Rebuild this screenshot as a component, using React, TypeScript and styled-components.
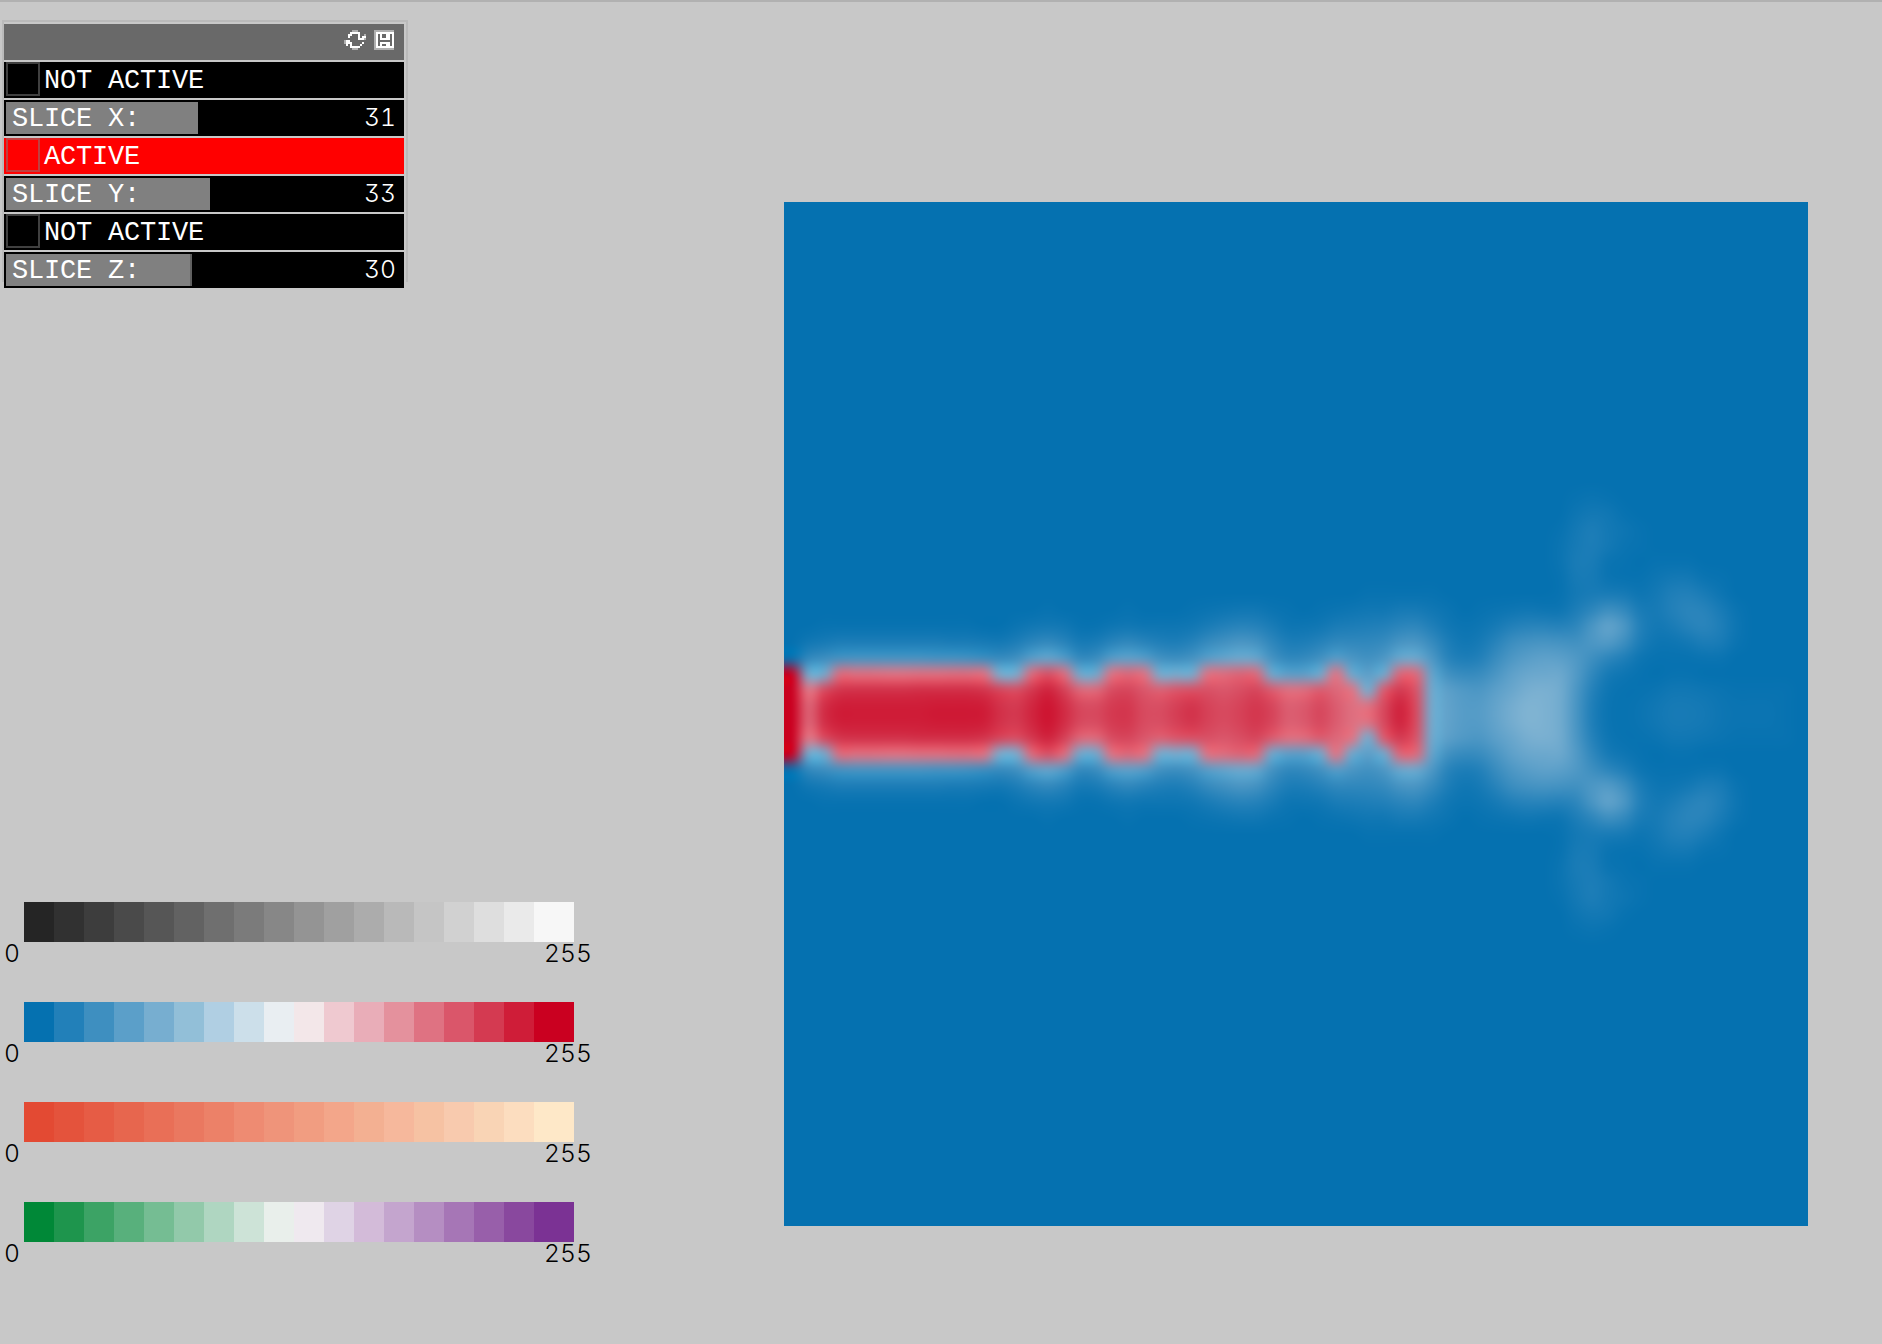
import React, { useLayoutEffect, useRef } from "react";
import styled, { createGlobalStyle } from "styled-components";

const GlobalStyle = createGlobalStyle`
  html, body { margin: 0; background: #c8c8c8; }
  body { overflow: hidden; }
  *, *::before, *::after { box-sizing: border-box; }
`;

const GREYS = ["#252525", "#313131", "#3d3d3d", "#4a4a4a", "#565656", "#626262", "#6f6f6f", "#7b7b7b", "#878787", "#949494", "#a0a0a0", "#acacac", "#b9b9b9", "#c5c5c5", "#d1d1d1", "#dedede", "#eaeaea", "#f7f7f7"];
const BLUE_RED = ["#0571b0", "#2280b9", "#3e8fc0", "#5b9fc9", "#77aed0", "#92bfd8", "#b0cfe3", "#ccdfea", "#e9eef2", "#f3e7e9", "#efc9d0", "#e9adb8", "#e4919d", "#df7282", "#da566a", "#d43a51", "#cf1d38", "#ca0020"];
const ORANGES = ["#e34a33", "#e4533c", "#e65c45", "#e7664e", "#e96f57", "#ea7860", "#ec8168", "#ee8b72", "#ef947a", "#f19d81", "#f3a68a", "#f3b092", "#f6b89c", "#f6c2a3", "#f8caae", "#f9d4b5", "#fcddbf", "#fee8c8"];
const GREEN_PURPLE = ["#008837", "#1e954d", "#3ca365", "#58b07c", "#75bd93", "#92c9aa", "#afd6c1", "#cde3d7", "#e9efeb", "#efe9ef", "#dfd3e5", "#d3bbd9", "#c4a5ce", "#b58ec2", "#a676b6", "#985faa", "#89489e", "#7b3294"];

const GRID = 64;
const CELL = 16;
const SIZE = GRID * CELL;

/* Field values per grid column, listed outward from the horizontal mid-line. */
const FIELD: number[][] = [
  [17, 17, 17, 0.1],
  [13.5, 12.8, 3.7, 1.5, 0.4],
  [15.4, 14.4, 3.8, 1.9, 0.6, 0.1],
  [16, 15.2, 13.2, 2.2, 0.8, 0.1],
  [16, 15.3, 13.1, 2.3, 0.8, 0.1],
  [16, 15.3, 13.1, 2.3, 0.8, 0.1],
  [16, 15.3, 13, 2.3, 0.8, 0.1],
  [16, 15.3, 13, 2.3, 0.8, 0.1],
  [16, 15.4, 13.1, 2.3, 0.8, 0.1],
  [16.1, 15.4, 13.1, 2.2, 0.8, 0.1],
  [16.1, 15.4, 13.2, 2.2, 0.7, 0.1],
  [16.1, 15.4, 13.2, 2.1, 0.7, 0.1],
  [16, 15.2, 13, 1.9, 0.6],
  [15.3, 14.6, 4, 1.7, 0.5],
  [15, 14.3, 4, 2, 0.8, 0.2],
  [15.7, 15.1, 13.3, 2.9, 1.3, 0.4],
  [16.3, 15.8, 14.2, 3.3, 1.6, 0.5, 0.1],
  [15.5, 14.8, 13.2, 2.7, 1.2, 0.4],
  [14.5, 13.4, 3.7, 1.6, 0.6, 0.1],
  [14.4, 13.3, 3.7, 1.8, 0.7, 0.1],
  [15, 14.4, 13, 2.8, 1.2, 0.3],
  [15.1, 14.6, 13.4, 3.1, 1.5, 0.4, 0.1],
  [14.4, 14, 13, 2.8, 1.2, 0.3],
  [14.3, 13.6, 3.9, 2.1, 0.9, 0.3],
  [14.8, 14, 3.9, 1.9, 0.8, 0.3],
  [15.2, 14.2, 3.9, 2.2, 1.1, 0.4, 0.1],
  [14.7, 14.2, 13, 2.9, 1.7, 0.7, 0.2],
  [14.4, 14, 13.2, 3.3, 2.1, 1, 0.3],
  [14.7, 14.3, 13.5, 3.6, 2.4, 1.2, 0.4],
  [15.1, 14.6, 13.3, 3.4, 2.2, 1.1, 0.4],
  [14.6, 13.8, 3.6, 2.2, 1.4, 0.7, 0.2],
  [13.7, 13.1, 3, 1.5, 0.8, 0.3, 0.1],
  [13.9, 13.2, 3, 1.6, 0.8, 0.3],
  [14.5, 13.8, 3.7, 2.1, 1.1, 0.4, 0.1],
  [13.8, 13.4, 12.9, 2.8, 1.5, 0.7, 0.2],
  [13.1, 12.9, 3.6, 2.4, 1.5, 0.8, 0.3],
  [13, 3.9, 3, 2.1, 1.5, 0.9, 0.4, 0.1],
  [14.5, 13.8, 3.7, 2.5, 1.7, 1, 0.4, 0.1],
  [15.8, 15, 13.4, 3.5, 2.3, 1.3, 0.6, 0.1],
  [14.4, 14.1, 13.3, 3.6, 2.4, 1.4, 0.6, 0.1],
  [3.8, 3.7, 3.3, 2.5, 1.7, 0.9, 0.4, 0.1],
  [3.2, 3, 2.1, 1.2, 0.8, 0.4, 0.2],
  [2.8, 2.6, 1.7, 0.8, 0.4, 0.2],
  [2.8, 2.5, 1.8, 1, 0.6, 0.3, 0.1],
  [3.3, 3, 2.4, 1.8, 1.2, 0.6, 0.2],
  [3.9, 3.5, 3.1, 2.5, 1.9, 1, 0.3],
  [4.3, 4, 3.5, 2.9, 2.2, 1.2, 0.4],
  [4.2, 4.1, 3.6, 3.1, 2.3, 1.2, 0.3],
  [3.8, 3.8, 3.6, 3, 2.2, 1.1, 0.3, 0.1, 0.1, 0.2, 0.2, 0.1],
  [2.4, 2.5, 2.7, 2.6, 2.1, 1.4, 0.8, 0.5, 0.6, 0.7, 0.6, 0.5, 0.3, 0.1],
  [0.9, 1.1, 1.5, 2, 2.5, 2.4, 1.4, 0.7, 0.6, 0.7, 0.8, 0.8, 0.5, 0.2],
  [0.2, 0.3, 0.6, 1.4, 2.7, 3.2, 2, 0.7, 0.2, 0.2, 0.5, 0.5, 0.4, 0.1],
  [0.1, 0.1, 0.3, 0.9, 2, 2.5, 1.6, 0.6, 0.1, 0.1, 0.2, 0.3, 0.1],
  [0.2, 0.1, 0.1, 0.3, 0.8, 1, 0.7, 0.3, 0.1, 0, 0.1, 0.1],
  [0.4, 0.2, 0, 0.1, 0.3, 0.5, 0.6, 0.5, 0.3, 0.1],
  [0.6, 0.4, 0.1, 0.1, 0.3, 0.7, 1, 0.9, 0.5, 0.1],
  [0.6, 0.4, 0.1, 0.1, 0.5, 1.1, 1.3, 1, 0.5, 0.1],
  [0.5, 0.3, 0, 0.2, 0.8, 1.3, 1.2, 0.7, 0.2],
  [0.3, 0.2, 0, 0.2, 0.7, 0.9, 0.7, 0.3, 0.1],
  [0.2, 0.1, 0, 0, 0.2, 0.3, 0.2],
  [0.2, 0.1],
  [0.2, 0.1],
  [0.1, 0.1],
  [0],
];

type Rgb = [number, number, number];
const STOPS: Rgb[] = BLUE_RED.map((hex) => [
  parseInt(hex.slice(1, 3), 16),
  parseInt(hex.slice(3, 5), 16),
  parseInt(hex.slice(5, 7), 16),
]);

function colourAt(value: number): Rgb {
  const low = Math.min(16, Math.floor(value));
  const t = value - low;
  return STOPS[low].map((c, i) => c + (STOPS[low + 1][i] - c) * t) as Rgb;
}

/* Mitchell-Netravali kernel, B = C = 1/3. */
function kernel(distance: number) {
  const x = Math.abs(distance);
  if (x < 1) return (7 * x * x * x - 12 * x * x + 16 / 3) / 6;
  if (x < 2) return ((-7 / 3) * x * x * x + 12 * x * x - 20 * x + 32 / 3) / 6;
  return 0;
}

/* Stretches a row of samples to SIZE pixels with the cubic kernel. */
function stretch(samples: number[]): number[] {
  const at = (i: number) => samples[Math.max(0, Math.min(GRID - 1, i))];
  return Array.from({ length: SIZE }, (_, p) => {
    const u = (p + 0.5) / CELL - 0.5;
    const i = Math.floor(u);
    let sum = 0;
    for (let k = i - 1; k <= i + 2; k++) sum += at(k) * kernel(u - k);
    return sum;
  });
}

function paintField(ctx: CanvasRenderingContext2D) {
  const image = ctx.createImageData(SIZE, SIZE);
  for (let ch = 0; ch < 3; ch++) {
    const columns = FIELD.map((column) =>
      stretch(
        Array.from({ length: GRID }, (_, row) => {
          const d = row < 32 ? 31 - row : row - 32;
          return colourAt(column[d] ?? 0)[ch];
        })
      )
    );
    for (let y = 0; y < SIZE; y++) {
      const line = stretch(columns.map((c) => c[y]));
      for (let x = 0; x < SIZE; x++) {
        image.data[(y * SIZE + x) * 4 + ch] = line[x];
      }
    }
  }
  for (let i = 3; i < image.data.length; i += 4) image.data[i] = 255;
  ctx.putImageData(image, 0, 0);
}

const Page = styled.main`
  display: flex;
  width: 1882px;
  height: 1344px;
  border-top: 2px solid #b1b1b1;
  background: #c8c8c8;
`;

const Sidebar = styled.aside`
  display: flex;
  flex-direction: column;
  justify-content: space-between;
  width: 784px;
  padding: 18px 0 78px 2px;
`;

const Panel = styled.section`
  position: relative;
  display: flex;
  flex-direction: column;
  gap: 2px;
  width: 406px;
  padding: 4px 4px 0 2px;

  &::before {
    content: "";
    position: absolute;
    inset: 0 0 6px 0;
    border: 2px solid #bababa;
    border-bottom: 0;
  }
`;

const PanelHeader = styled.header`
  position: relative;
  display: flex;
  justify-content: flex-end;
  gap: 8px;
  height: 36px;
  padding: 6px 10px 0 0;
  background: #696969;
`;

const PixelIcon = styled.svg`
  display: block;
  height: 20px;
  shape-rendering: crispEdges;
`;

const labelFont = `
  font-family: "Liberation Mono", monospace;
  font-size: 27px;
  letter-spacing: -0.2px;
  white-space: pre;
`;

const numberFont = `
  font-family: Inter, "Liberation Sans", sans-serif;
  font-weight: 300;
  font-size: 24.7px;
  font-feature-settings: "tnum", "cv09";
  white-space: pre;
`;

const ToggleRow = styled.div<{ $on: boolean }>`
  position: relative;
  display: flex;
  height: 36px;
  padding-left: 2px;
  background: ${(p) => (p.$on ? "#ff0000" : "#000000")};
`;

const ToggleBox = styled.span`
  width: 34px;
  height: 34px;
  border: 2px solid rgba(128, 128, 128, 0.5);
`;

const ToggleLabel = styled.span`
  ${labelFont}
  line-height: 38px;
  margin-left: 4px;
  color: #fff;
`;

const SliderRow = styled.div`
  position: relative;
  display: flex;
  height: 36px;
  padding: 2px;
  background: #000;
`;

const SliderFill = styled.div<{ $width: number; $partial?: boolean }>`
  width: ${(p) => p.$width}px;
  height: 32px;
  background: #808080;
  border-right: ${(p) => (p.$partial ? "2px solid #606060" : "0")};
`;

const SliderLabel = styled.span`
  ${labelFont}
  display: block;
  line-height: 34px;
  padding-left: 6px;
  color: #fff;
`;

const SliderValue = styled.span`
  ${numberFont}
  margin-left: auto;
  padding-right: 6px;
  line-height: 31px;
  color: #fff;
`;

const Legends = styled.section`
  display: flex;
  flex-direction: column;
  gap: 36px;
`;

const Legend = styled.div`
  display: flex;
  flex-direction: column;
`;

const Swatches = styled.div`
  display: flex;
  width: 550px;
  height: 40px;
  margin-left: 22px;
`;

const Swatch = styled.span<{ $colour: string }>`
  flex: 0 0 30px;
  background: ${(p) => p.$colour};
  &:last-child {
    flex-basis: 40px;
  }
`;

const Range = styled.div`
  ${numberFont}
  display: flex;
  justify-content: space-between;
  width: 590px;
  height: 24px;
  padding-left: 2px;
  line-height: 22px;
  color: #000;
`;

const Field = styled.canvas`
  display: block;
  width: ${SIZE}px;
  height: ${SIZE}px;
  margin-top: 200px;
`;

/* "#" is a full pixel, "+" a dimmed one. */
const REFRESH = [
  "....+++....",
  "...#####...",
  "..##...#..+",
  "..#....#.##",
  ".......###+",
  "+##........",
  "+###.....#.",
  ".#.#....#..",
  "...#####...",
  "....+++....",
];
const SAVE = [
  "++++++++++",
  "+#########",
  "+#.#..##.#",
  "+#.#..##.#",
  "+#.#####.#",
  "+#.......#",
  "+#.#####.#",
  "+#.#..##.#",
  "+#########",
  "++++++++++",
];

function Pixels({ rows }: { rows: string[] }) {
  const w = rows[0].length;
  return (
    <PixelIcon viewBox={`0 0 ${w} ${rows.length}`} width={w * 2}>
      {rows.flatMap((row, y) =>
        [...row].map((c, x) =>
          c === "." ? null : (
            <rect key={`${x}-${y}`} x={x} y={y} width={1} height={1} fill={c === "#" ? "#fff" : "#b0b0b0"} />
          )
        )
      )}
    </PixelIcon>
  );
}

const AXES = [
  { name: "X", value: 31, width: 192, active: false },
  { name: "Y", value: 33, width: 204, active: true },
  { name: "Z", value: 30, width: 186, active: false, partial: true },
];

export default function App() {
  const canvas = useRef<HTMLCanvasElement>(null);

  useLayoutEffect(() => {
    const ctx = canvas.current?.getContext("2d");
    if (ctx) paintField(ctx);
  }, []);

  return (
    <Page>
      <GlobalStyle />
      <Sidebar>
        <Panel>
          <PanelHeader>
            <Pixels rows={REFRESH} />
            <Pixels rows={SAVE} />
          </PanelHeader>
          {AXES.map((axis) => (
            <React.Fragment key={axis.name}>
              <ToggleRow $on={axis.active}>
                <ToggleBox />
                <ToggleLabel>{axis.active ? "ACTIVE" : "NOT ACTIVE"}</ToggleLabel>
              </ToggleRow>
              <SliderRow>
                <SliderFill $width={axis.width} $partial={axis.partial}>
                  <SliderLabel>{`SLICE ${axis.name}:`}</SliderLabel>
                </SliderFill>
                <SliderValue>{axis.value}</SliderValue>
              </SliderRow>
            </React.Fragment>
          ))}
        </Panel>
        <Legends>
          {[GREYS, BLUE_RED, ORANGES, GREEN_PURPLE].map((palette) => (
            <Legend key={palette[0]}>
              <Swatches>
                {palette.map((colour) => (
                  <Swatch key={colour} $colour={colour} />
                ))}
              </Swatches>
              <Range>
                <span>0</span>
                <span>255</span>
              </Range>
            </Legend>
          ))}
        </Legends>
      </Sidebar>
      <Field ref={canvas} width={SIZE} height={SIZE} />
    </Page>
  );
}
